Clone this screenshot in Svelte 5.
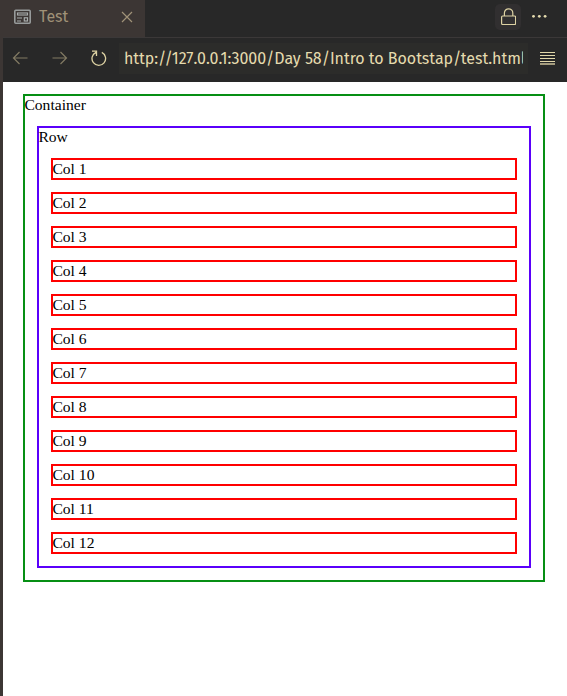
<script>
  const cols = Array.from({ length: 12 }, (_, i) => i + 1);
</script>

<div class="window">
  <header class="tabs">
    <div class="tab">
      <svg class="page-icon" width="18" height="16" viewBox="0 0 18 16" fill="none">
        <rect x="0.8" y="1.2" width="15.4" height="13" rx="1" stroke="#979b9b" stroke-width="1.6" />
        <rect x="3.5" y="4" width="10" height="2" stroke="#a8adad" stroke-width="1.1" />
        <path d="M3 9h5M3 12h4" stroke="#a8adad" stroke-width="1.2" />
        <rect x="10.3" y="8.8" width="3.2" height="3.2" stroke="#a8adad" stroke-width="1.2" />
      </svg>
      <span class="title">Test</span>
      <svg class="close" width="12" height="12" viewBox="0 0 12 12" fill="none" stroke="#a09278" stroke-width="1.2">
        <path d="M1 1l10 10M11 1L1 11" />
      </svg>
    </div>
    <div class="actions">
      <div class="lock">
        <svg width="16" height="18" viewBox="0 0 16 18" fill="none" stroke="#ddd2a3">
          <rect x="1.6" y="8" width="14" height="8.5" rx="1" stroke-width="1.2" />
          <path d="M4.4 8V5a4.2 4.2 0 0 1 8.4 0v3" stroke-width="1.2" />
        </svg>
      </div>
      <svg class="dots" width="16" height="4" viewBox="0 0 16 4" fill="#e5dbae">
        <circle cx="1.5" cy="2.3" r="1.4" /><circle cx="7.3" cy="2.3" r="1.4" /><circle cx="13.1" cy="2.3" r="1.4" />
      </svg>
    </div>
  </header>

  <main>
    <nav>
      <svg class="back" width="16" height="14" viewBox="0 0 16 14" fill="none" stroke="#827a63" stroke-width="1.2">
        <path d="M15.5 7H1.5M7.5 1l-6 6 6 6" />
      </svg>
      <svg class="forward" width="16" height="14" viewBox="0 0 16 14" fill="none" stroke="#827a63" stroke-width="1.2">
        <path d="M.5 7h14M8.5 1l6 6-6 6" />
      </svg>
      <svg class="reload" width="16" height="16" viewBox="0 0 16 16" fill="none" stroke="#ddd2a3" stroke-width="1.3">
        <path d="M10.8 2.4A6.8 6.8 0 1 1 5 2.3M1 1.2h4.5V6" />
      </svg>
      <div class="address"><span class="url">http://127.0.0.1:3000/Day 58/Intro to Bootstap/test.html</span></div>
      <svg class="menu" width="15" height="14" viewBox="0 0 15 14">
        <path d="M0 1.5h15M0 4.5h15M0 7.5h15M0 10.5h15" stroke="#e2d8aa" />
        <path d="M0 13h15" stroke="#a49c7e" stroke-width="2" />
      </svg>
    </nav>
    <section class="page">
      <div class="box container">
        Container
        <div class="box row">
          Row
          {#each cols as n}
            <div class="box col">Col {n}</div>
          {/each}
        </div>
      </div>
    </section>
  </main>
</div>

<style>
  .window {
    height: 696px;
    display: flex;
    flex-direction: column;
    overflow: hidden;
    background: #3c3634;
  }
  .tabs {
    height: 37px;
    flex: none;
    display: flex;
    justify-content: space-between;
    background: #282828;
  }
  .tab {
    box-sizing: border-box;
    width: 145px;
    height: 38px;
    padding: 0 12px 5px 14px;
    display: flex;
    align-items: center;
    background: #3c3634;
  }
  .title {
    margin-left: 7px;
    flex: 1;
    font: 16px/20px "Fira Sans", "Noto Sans", sans-serif;
    color: #a09278;
  }
  .actions {
    display: flex;
    padding: 4px 19px 0 0;
  }
  .lock {
    width: 26px;
    height: 26px;
    border-radius: 5px;
    background: #312f30;
    display: flex;
    align-items: center;
    justify-content: center;
  }
  .dots {
    margin: 10px 0 0 11px;
  }
  main {
    flex: 1;
    margin-left: 3px;
    display: flex;
    flex-direction: column;
  }
  nav {
    box-sizing: border-box;
    height: 45px;
    border-top: 1px solid #3b3838;
    display: flex;
    align-items: center;
    padding: 0 12px 4px 9px;
    background: #282828;
  }
  nav svg {
    flex: none;
  }
  .forward {
    margin-left: 24px;
  }
  .reload {
    margin-left: 23px;
  }
  .address {
    box-sizing: border-box;
    width: 409px;
    height: 31px;
    margin-left: 12px;
    padding: 0 5px;
    background: #2c2c2a;
  }
  .url {
    display: block;
    overflow: hidden;
    white-space: nowrap;
    font: 16px/32px "Fira Sans", "Noto Sans", sans-serif;
    letter-spacing: -0.04px;
    color: #e5dbae;
  }
  .menu {
    margin-left: 12px;
  }
  .page {
    flex: 1;
    padding: 12px 22px 0 20px;
    background: #fff;
    font: 15.6px/18px "Liberation Serif", serif;
    color: #000;
    text-indent: -0.6px;
  }
  .box {
    border: 2px solid;
  }
  .container {
    border-color: #068f14;
    padding-bottom: 12px;
  }
  .row {
    border-color: #5a00fa;
    margin: 12px 12px 0;
    padding-bottom: 12px;
  }
  .col {
    border-color: #f00;
    margin: 12px 12px 0;
  }
</style>
